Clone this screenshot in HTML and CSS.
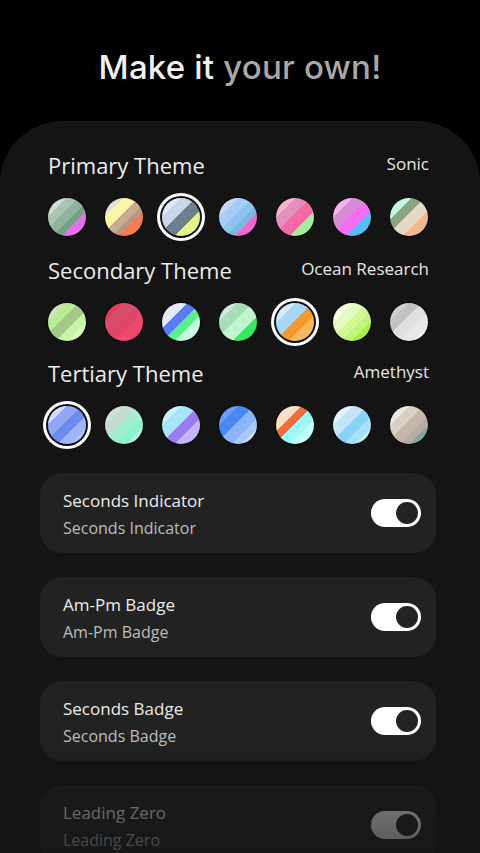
FILE: index.html
```html
<!DOCTYPE html>
<html>
<head>
<meta charset="utf-8">
<link rel="stylesheet" href="styles.css">
</head>
<body>
<h1 class="title">Make it <span class="muted">your own!</span></h1>
<main class="panel">
  <section class="theme">
    <div class="theme-head"><h2>Primary Theme</h2><span class="value">Sonic</span></div>
    <div class="swatches">
      <span class="sw p1"></span><span class="sw p2"></span><span class="sw p3 sel"></span><span class="sw p4"></span><span class="sw p5"></span><span class="sw p6"></span><span class="sw p7"></span>
    </div>
  </section>
  <section class="theme">
    <div class="theme-head"><h2>Secondary Theme</h2><span class="value">Ocean Research</span></div>
    <div class="swatches">
      <span class="sw s1"></span><span class="sw s2"></span><span class="sw s3"></span><span class="sw s4"></span><span class="sw s5 sel"></span><span class="sw s6"></span><span class="sw s7"></span>
    </div>
  </section>
  <section class="theme">
    <div class="theme-head"><h2>Tertiary Theme</h2><span class="value">Amethyst</span></div>
    <div class="swatches">
      <span class="sw t1 sel"></span><span class="sw t2"></span><span class="sw t3"></span><span class="sw t4"></span><span class="sw t5"></span><span class="sw t6"></span><span class="sw t7"></span>
    </div>
  </section>
  <div class="cards">
    <div class="card"><div class="card-text"><div class="card-title">Seconds Indicator</div><div class="card-sub">Seconds Indicator</div></div><span class="toggle"><span class="thumb"></span></span></div>
    <div class="card"><div class="card-text"><div class="card-title">Am-Pm Badge</div><div class="card-sub">Am-Pm Badge</div></div><span class="toggle"><span class="thumb"></span></span></div>
    <div class="card"><div class="card-text"><div class="card-title">Seconds Badge</div><div class="card-sub">Seconds Badge</div></div><span class="toggle"><span class="thumb"></span></span></div>
    <div class="card"><div class="card-text"><div class="card-title">Leading Zero</div><div class="card-sub">Leading Zero</div></div><span class="toggle"><span class="thumb"></span></span></div>
  </div>
</main>
<div class="fade"></div>
</body>
</html>
```
FILE: styles.css
```css
html, body {
  margin: 0;
  padding: 0;
  background: #000;
  height: 853px;
  overflow: hidden;
}
body {
  font-family: "Open Sans", "Noto Sans", sans-serif;
  color: #ececec;
}
.title {
  margin: 0;
  padding-top: 46px;
  height: 74px;
  box-sizing: border-box;
  text-align: center;
  font-family: "Inter", "Noto Sans", sans-serif;
  font-weight: 500;
  font-size: 33px;
  line-height: 42px;
  letter-spacing: 0.2px;
  color: #f2f2f2;
}
.title .muted { color: #a8a8a8; }
.panel {
  margin-top: 47px;
  background: #141414;
  border-radius: 62px 62px 0 0;
  padding: 28px 51px 0 48px;
  min-height: 800px;
}
.theme { margin-bottom: 18px; }
.theme:nth-child(2) { margin-bottom: 16px; }
.theme:nth-child(3) { margin-bottom: 15px; }
.theme-head {
  display: flex;
  justify-content: space-between;
  align-items: center;
  height: 32px;
}
.theme-head h2 {
  margin: 0;
  font-weight: 400;
  font-size: 22px;
  line-height: 32px;
  color: #ececec;
}
.theme-head .value {
  font-size: 17px;
  line-height: 24px;
  color: #e6e6e6;
  margin-top: -2px;
}
.swatches {
  display: flex;
  justify-content: space-between;
  width: 380px;
  margin-top: 17px;
}
.sw {
  width: 38px;
  height: 38px;
  border-radius: 50%;
  display: block;
  box-shadow: 0 0 0 1px rgba(0,0,0,0.5);
}
.sw.sel {
  box-shadow: 0 0 0 1px #111, 0 0 0 2px #111, 0 0 0 5px #fff;
}
.p1 { background: linear-gradient(135deg, #c9ddd0 0 24%, #a9c6b5 24% 40%, #8fb39b 40% 56%, #7a9f87 56% 68%, #e66ff2 68%); }
.p2 { background: linear-gradient(135deg, #e4e2cc 0 24%, #fbf7a6 24% 44%, #c9ab90 44% 58%, #b39a84 58% 68%, #f57a55 68%); }
.p3 { background: linear-gradient(135deg, #e3ebf7 0 24%, #c9d8e8 24% 44%, #6e7f90 44% 66%, #e4f58a 66%); }
.p4 { background: linear-gradient(135deg, #c6d8ef 0 26%, #a6cdf7 26% 44%, #8fc4ef 44% 58%, #7ab8e4 58% 70%, #f067d0 70%); }
.p5 { background: linear-gradient(135deg, #f8b3cf 0 26%, #e290bf 26% 46%, #f06aa6 46% 68%, #a4ed9c 68%); }
.p6 { background: linear-gradient(135deg, #f5b0f1 0 26%, #d98cd6 26% 46%, #f76ef4 46% 68%, #56bdf4 68%); }
.p7 { background: linear-gradient(135deg, #c4f2e4 0 28%, #87a67e 28% 46%, #e8d8c8 46% 66%, #f4b88e 66%); }
.s1 { background: linear-gradient(135deg, #cde5b4 0 24%, #b8ec94 24% 40%, #a5c98a 40% 60%, #c8f3a8 60% 76%, #d8f8b8 76%); }
.s2 { background: linear-gradient(135deg, #e83a5a 0 24%, #d84e6a 24% 44%, #e0466a 44% 62%, #ee4a6e 62% 78%, #f4406a 78%); }
.s3 { background: linear-gradient(135deg, #e6e9fb 0 34%, #5a7cf0 34% 50%, #5af08c 50% 66%, #c8f8dc 66%); }
.s4 { background: linear-gradient(135deg, #cfe6d8 0 24%, #a8dbb8 24% 44%, #c0f4cc 44% 68%, #34e860 68%); }
.s5 { background: linear-gradient(135deg, #d6ecfb 0 26%, #a8d8f4 26% 48%, #f49a2c 48% 66%, #f8b860 66%); }
.s6 { background: linear-gradient(135deg, #f4ffe0 0 26%, #e4fcc0 26% 44%, #d0f894 44% 60%, #c4f480 60% 74%, #a8f040 74%); }
.s7 { background: linear-gradient(135deg, #d0d0d0 0 24%, #c2c2c2 24% 42%, #e0e0e0 42% 62%, #e8e8e8 62% 80%, #f2f2f2 80%); }
.t1 { background: linear-gradient(135deg, #d4dcfb 0 24%, #8ea8f4 24% 44%, #6e8cf0 44% 62%, #a0b6f8 62% 80%, #b0c0fa 80%); }
.t2 { background: linear-gradient(135deg, #d0e0d4 0 26%, #c4dcd0 26% 44%, #a0f0d0 44% 64%, #8cf4cc 64% 78%, #b0f8e0 78%); }
.t3 { background: linear-gradient(135deg, #c8f0fa 0 26%, #a8e4f8 26% 48%, #9b7cf0 48% 66%, #c8b4f8 66%); }
.t4 { background: linear-gradient(135deg, #6c9cf4 0 26%, #4a88f0 26% 46%, #8cb4f8 46% 66%, #a8c8f8 66% 80%, #c8dcfc 80%); }
.t5 { background: linear-gradient(135deg, #fce0c0 0 34%, #f86a3c 34% 48%, #a0f8f4 48% 68%, #c0fcf8 68%); }
.t6 { background: linear-gradient(135deg, #e8f0f8 0 26%, #c4e4f8 26% 46%, #88d4f8 46% 64%, #a8e0f8 64% 80%, #c8ecfa 80%); }
.t7 { background: linear-gradient(135deg, #ece8e0 0 26%, #d8d0c4 26% 44%, #c4b8a8 44% 62%, #b8aca0 62% 76%, #80a8a8 76%); }
.cards {
  margin: 29px -7px 0 -8px;
  display: flex;
  flex-direction: column;
  gap: 24px;
}
.card {
  height: 80px;
  box-sizing: border-box;
  background: #222;
  border-radius: 22px;
  display: flex;
  align-items: center;
  justify-content: space-between;
  padding: 2px 15px 0 23px;
}
.card-text { display: flex; flex-direction: column; gap: 5px; }
.card-title { font-size: 17px; line-height: 22px; color: #ececec; }
.card-sub { font-size: 16px; line-height: 22px; color: #bdbdbd; }
.toggle {
  width: 50px;
  height: 28px;
  border-radius: 14px;
  background: #fff;
  display: flex;
  align-items: center;
  justify-content: flex-end;
  padding-right: 3px;
  box-sizing: border-box;
  margin-top: -2px;
}
.thumb {
  width: 22px;
  height: 22px;
  border-radius: 50%;
  background: #232323;
}
.fade {
  position: fixed;
  left: 0;
  right: 0;
  bottom: 0;
  height: 110px;
  background: linear-gradient(to bottom, rgba(20,20,20,0) 0%, rgba(20,20,20,0.55) 40%, rgba(20,20,20,0.72) 100%);
  pointer-events: none;
}
```
